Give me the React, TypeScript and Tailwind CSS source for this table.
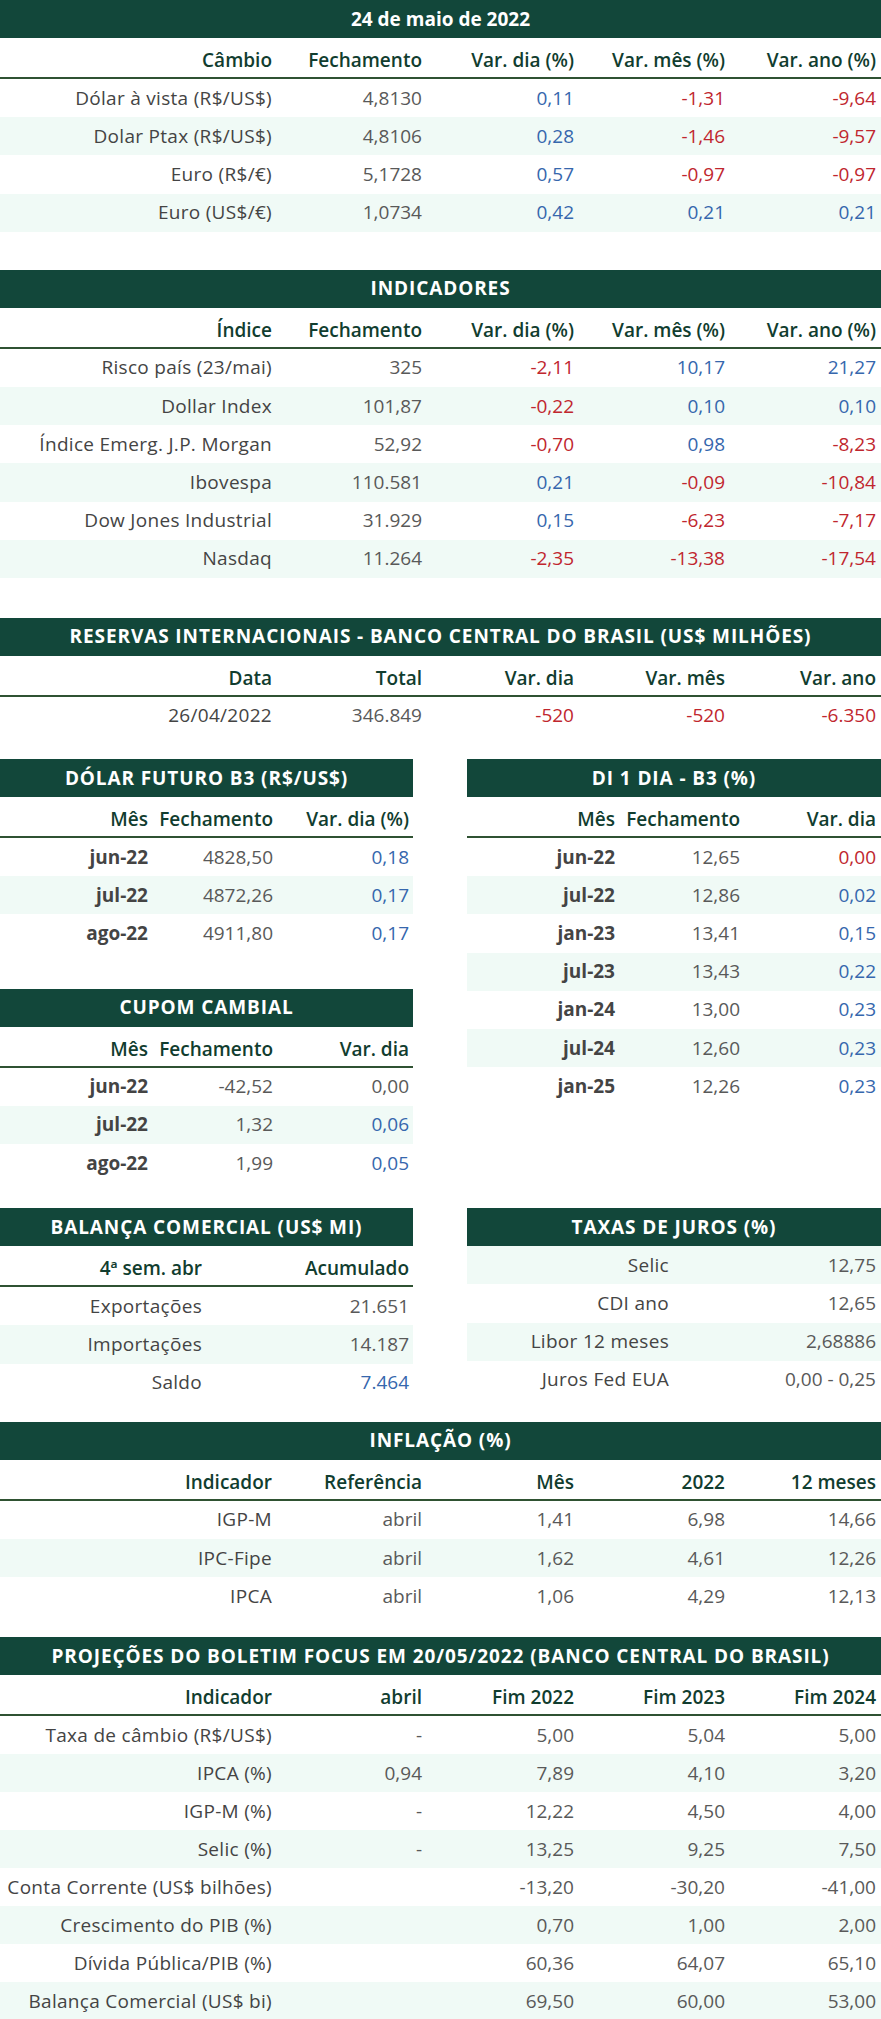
import React from "react";

type Tone = "g" | "b" | "r";

// values: "b|0,11" = blue, "r|-1,31" = red, plain = gray
function parse(v: string): { t: Tone; s: string } {
  if (v.startsWith("b|")) return { t: "b", s: v.slice(2) };
  if (v.startsWith("r|")) return { t: "r", s: v.slice(2) };
  return { t: "g", s: v };
}

const toneClass: Record<Tone, string> = {
  g: "text-[#595959]",
  b: "text-[#3667ad]",
  r: "text-[#c0262e]",
};

function Title({ children }: { children: string }) {
  const caps = children === children.toUpperCase();
  return (
    <div
      className={`flex h-[38px] items-center justify-center bg-[#12473a] text-[19px] font-bold text-white whitespace-nowrap ${caps ? "tracking-[0.9px]" : ""}`}
    >
      {children}
    </div>
  );
}

interface TableProps {
  title: string;
  cols: string;
  head?: string[];
  rows: string[][];
  boldLabel?: boolean;
  tintFirst?: boolean;
  rowH?: string;
}

function Table({ title, cols, head, rows, boldLabel, tintFirst, rowH = "h-[38.2px]" }: TableProps) {
  return (
    <div>
      <Title>{title}</Title>
      {head && (
        <div className={`grid ${cols} h-[41px] items-end border-b-2 border-[#2f5232] pb-[7px] font-semibold text-[#113d2f]`}>
          {head.map((h, i) => (
            <div key={i} className="text-right whitespace-nowrap">
              {h}
            </div>
          ))}
        </div>
      )}
      {rows.map((r, i) => {
        const tinted = tintFirst ? i % 2 === 0 : i % 2 === 1;
        return (
          <div
            key={i}
            className={`grid ${cols} ${rowH} items-center ${tinted ? "bg-[#f0faf6]" : "bg-white"}`}
          >
            {r.map((c, j) => {
              if (j === 0)
                return (
                  <div
                    key={j}
                    className={`text-right whitespace-nowrap text-[#444444] ${boldLabel ? "font-bold" : "font-medium tracking-[0.3px]"}`}
                  >
                    {c}
                  </div>
                );
              const p = parse(c);
              return (
                <div key={j} className={`text-right whitespace-nowrap ${toneClass[p.t]}`}>
                  {p.s}
                </div>
              );
            })}
          </div>
        );
      })}
    </div>
  );
}

const FIVE = "grid-cols-[272px_150px_152px_151px_151px]";
const THREE = "grid-cols-[148px_125px_136px]";
const TWO = "grid-cols-[202px_207px]";

export default function App() {
  return (
    <div className="w-[881px] bg-white font-['Open_Sans',sans-serif] text-[19px] leading-none">
      <Table
        title="24 de maio de 2022"
        cols={FIVE}
        head={["Câmbio", "Fechamento", "Var. dia (%)", "Var. mês (%)", "Var. ano (%)"]}
        rows={[
          ["Dólar à vista (R$/US$)", "4,8130", "b|0,11", "r|-1,31", "r|-9,64"],
          ["Dolar Ptax (R$/US$)", "4,8106", "b|0,28", "r|-1,46", "r|-9,57"],
          ["Euro (R$/€)", "5,1728", "b|0,57", "r|-0,97", "r|-0,97"],
          ["Euro (US$/€)", "1,0734", "b|0,42", "b|0,21", "b|0,21"],
        ]}
      />

      <div className="mt-[38px]">
        <Table
          title="INDICADORES"
          cols={FIVE}
          head={["Índice", "Fechamento", "Var. dia (%)", "Var. mês (%)", "Var. ano (%)"]}
          rows={[
            ["Risco país (23/mai)", "325", "r|-2,11", "b|10,17", "b|21,27"],
            ["Dollar Index", "101,87", "r|-0,22", "b|0,10", "b|0,10"],
            ["Índice Emerg. J.P. Morgan", "52,92", "r|-0,70", "b|0,98", "r|-8,23"],
            ["Ibovespa", "110.581", "b|0,21", "r|-0,09", "r|-10,84"],
            ["Dow Jones Industrial", "31.929", "b|0,15", "r|-6,23", "r|-7,17"],
            ["Nasdaq", "11.264", "r|-2,35", "r|-13,38", "r|-17,54"],
          ]}
        />
      </div>

      <div className="mt-[40px]">
        <Table
          title="RESERVAS INTERNACIONAIS - BANCO CENTRAL DO BRASIL (US$ MILHÕES)"
          cols={FIVE}
          head={["Data", "Total", "Var. dia", "Var. mês", "Var. ano"]}
          rows={[["26/04/2022", "346.849", "r|-520", "r|-520", "r|-6.350"]]}
        />
      </div>

      <div className="mt-[24px] grid grid-cols-[413px_414px] gap-x-[54px]">
        <div>
          <Table
            title="DÓLAR FUTURO B3 (R$/US$)"
            cols={THREE}
            head={["Mês", "Fechamento", "Var. dia (%)"]}
            boldLabel
            rows={[
              ["jun-22", "4828,50", "b|0,18"],
              ["jul-22", "4872,26", "b|0,17"],
              ["ago-22", "4911,80", "b|0,17"],
            ]}
          />
          <div className="mt-[36px]">
            <Table
              title="CUPOM CAMBIAL"
              cols={THREE}
              head={["Mês", "Fechamento", "Var. dia"]}
              boldLabel
              rows={[
                ["jun-22", "-42,52", "0,00"],
                ["jul-22", "1,32", "b|0,06"],
                ["ago-22", "1,99", "b|0,05"],
              ]}
            />
          </div>
        </div>
        <div>
          <Table
            title="DI 1 DIA - B3 (%)"
            cols={THREE}
            head={["Mês", "Fechamento", "Var. dia"]}
            boldLabel
            rows={[
              ["jun-22", "12,65", "r|0,00"],
              ["jul-22", "12,86", "b|0,02"],
              ["jan-23", "13,41", "b|0,15"],
              ["jul-23", "13,43", "b|0,22"],
              ["jan-24", "13,00", "b|0,23"],
              ["jul-24", "12,60", "b|0,23"],
              ["jan-25", "12,26", "b|0,23"],
            ]}
          />
        </div>
      </div>

      <div className="mt-[26px] grid grid-cols-[413px_414px] gap-x-[54px]">
        <Table
          title="BALANÇA COMERCIAL (US$ MI)"
          cols={TWO}
          head={["4ª sem. abr", "Acumulado"]}
          rows={[
            ["Exportações", "21.651"],
            ["Importações", "14.187"],
            ["Saldo", "b|7.464"],
          ]}
        />
        <Table
          title="TAXAS DE JUROS (%)"
          cols={TWO}
          tintFirst
          rows={[
            ["Selic", "12,75"],
            ["CDI ano", "12,65"],
            ["Libor 12 meses", "2,68886"],
            ["Juros Fed EUA", "0,00 - 0,25"],
          ]}
        />
      </div>

      <div className="mt-[20px]">
        <Table
          title="INFLAÇÃO (%)"
          cols={FIVE}
          head={["Indicador", "Referência", "Mês", "2022", "12 meses"]}
          rows={[
            ["IGP-M", "abril", "1,41", "6,98", "14,66"],
            ["IPC-Fipe", "abril", "1,62", "4,61", "12,26"],
            ["IPCA", "abril", "1,06", "4,29", "12,13"],
          ]}
        />
      </div>

      <div className="mt-[22px]">
        <Table
          title="PROJEÇÕES DO BOLETIM FOCUS EM 20/05/2022 (BANCO CENTRAL DO BRASIL)"
          cols={FIVE}
          head={["Indicador", "abril", "Fim 2022", "Fim 2023", "Fim 2024"]}
          rowH="h-[38px]"
          rows={[
            ["Taxa de câmbio (R$/US$)", "-", "5,00", "5,04", "5,00"],
            ["IPCA (%)", "0,94", "7,89", "4,10", "3,20"],
            ["IGP-M (%)", "-", "12,22", "4,50", "4,00"],
            ["Selic (%)", "-", "13,25", "9,25", "7,50"],
            ["Conta Corrente (US$ bilhões)", "", "-13,20", "-30,20", "-41,00"],
            ["Crescimento do PIB (%)", "", "0,70", "1,00", "2,00"],
            ["Dívida Pública/PIB (%)", "", "60,36", "64,07", "65,10"],
            ["Balança Comercial (US$ bi)", "", "69,50", "60,00", "53,00"],
          ]}
        />
      </div>
    </div>
  );
}
